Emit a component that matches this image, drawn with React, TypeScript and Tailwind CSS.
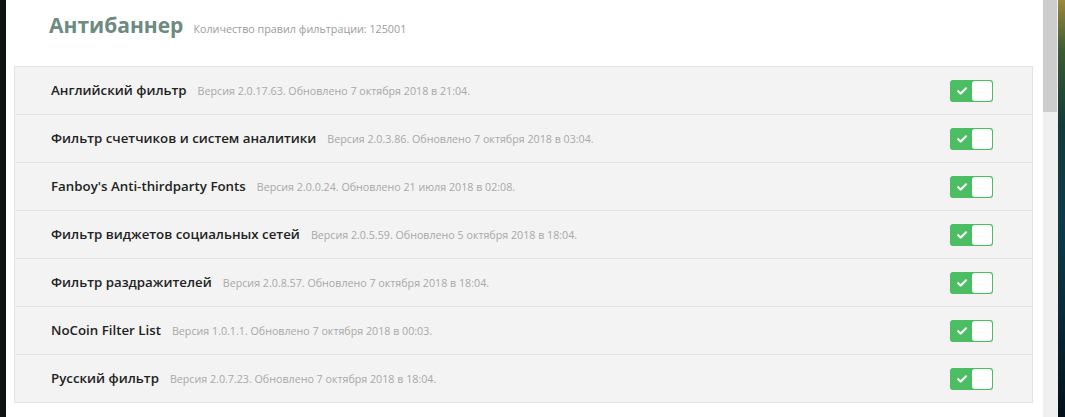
import React from 'react';

type Filter = {
  name: string;
  meta: string;
};

const filters: Filter[] = [
  { name: 'Английский фильтр', meta: 'Версия 2.0.17.63. Обновлено 7 октября 2018 в 21:04.' },
  { name: 'Фильтр счетчиков и систем аналитики', meta: 'Версия 2.0.3.86. Обновлено 7 октября 2018 в 03:04.' },
  { name: "Fanboy's Anti-thirdparty Fonts", meta: 'Версия 2.0.0.24. Обновлено 21 июля 2018 в 02:08.' },
  { name: 'Фильтр виджетов социальных сетей', meta: 'Версия 2.0.5.59. Обновлено 5 октября 2018 в 18:04.' },
  { name: 'Фильтр раздражителей', meta: 'Версия 2.0.8.57. Обновлено 7 октября 2018 в 18:04.' },
  { name: 'NoCoin Filter List', meta: 'Версия 1.0.1.1. Обновлено 7 октября 2018 в 00:03.' },
  { name: 'Русский фильтр', meta: 'Версия 2.0.7.23. Обновлено 7 октября 2018 в 18:04.' },
];

const Toggle: React.FC = () => (
  <div className="flex h-[22px] w-[43px] rounded-[3px] bg-[#4bbd62] p-px">
    <div className="flex w-[21px] items-center justify-center">
      <svg width="10" height="8" viewBox="0 0 10 8" fill="none">
        <path d="M1.2 4.2 L3.8 6.6 L8.8 1.4" stroke="white" strokeWidth="2.2" strokeLinecap="round" strokeLinejoin="round" />
      </svg>
    </div>
    <div className="h-[20px] w-[20px] rounded-[3px] bg-white" />
  </div>
);

const App: React.FC = () => {
  return (
    <div className="flex h-[417px] w-[1065px] overflow-hidden bg-white font-['Open_Sans',sans-serif]">
      <div className="w-[6px] shrink-0 bg-[#0f1312]" />

      <div className="flex-1 pt-[10px]">
        <div className="flex items-baseline pl-[43px]">
          <h1 className="text-[21px] leading-[30px] font-bold text-[#6e8b80]">Антибаннер</h1>
          <span className="ml-[10px] text-[10.75px] text-[#9c9c9c]">Количество правил фильтрации: 125001</span>
        </div>

        <div className="mt-[26px] ml-[8px] mr-[10px] border border-b-0 border-[#e3e3e3] bg-[#f3f3f3]">
          {filters.map((f) => (
            <div key={f.name} className="flex h-[48px] items-center border-b border-[#e3e3e3] pl-[36px] pr-[39px]">
              <span className="text-[13.3px] font-semibold text-[#222]">{f.name}</span>
              <span className="ml-[11px] pt-px text-[10.7px] text-[#a8a8a8]">{f.meta}</span>
              <div className="ml-auto">
                <Toggle />
              </div>
            </div>
          ))}
        </div>
      </div>

      <div className="flex w-[15px] shrink-0 flex-col bg-[#f0f0f0]">
        <div className="h-[112px] w-[14px] bg-[#cdcdcd]" />
      </div>

      <div className="w-[7px] shrink-0 bg-[linear-gradient(180deg,#9a8a3a_0%,#3d5a33_12%,#123a38_30%,#0d3a48_55%,#0a2a36_75%,#031018_100%)]" />
    </div>
  );
};

export default App;
